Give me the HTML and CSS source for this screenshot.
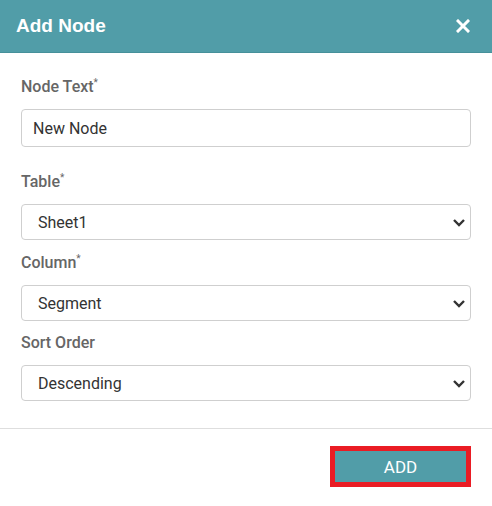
FILE: index.html
```html
<!DOCTYPE html>
<html>
<head>
<meta charset="utf-8">
<link rel="stylesheet" href="styles.css">
</head>
<body>
<div class="dialog">
  <div class="header">
    <span class="title">Add Node</span>
    <svg class="close" width="14" height="14" viewBox="0 0 14 14"><path d="M2 2 L12 12 M12 2 L2 12" stroke="#fff" stroke-width="3" stroke-linecap="square"/></svg>
  </div>
  <div class="body">
    <div class="field field-text">
      <label class="label">Node Text<sup>*</sup></label>
      <input class="input" type="text" value="New Node">
    </div>
    <div class="field field-table">
      <label class="label">Table<sup>*</sup></label>
      <div class="select-wrap">
        <select class="select"><option>Sheet1</option></select>
        <svg class="chev" width="14" height="9" viewBox="0 0 14 9"><path d="M2 2 L7 7 L12 2" fill="none" stroke="#333" stroke-width="2.4"/></svg>
      </div>
    </div>
    <div class="field field-column">
      <label class="label">Column<sup>*</sup></label>
      <div class="select-wrap">
        <select class="select"><option>Segment</option></select>
        <svg class="chev" width="14" height="9" viewBox="0 0 14 9"><path d="M2 2 L7 7 L12 2" fill="none" stroke="#333" stroke-width="2.4"/></svg>
      </div>
    </div>
    <div class="field last">
      <label class="label">Sort Order</label>
      <div class="select-wrap">
        <select class="select"><option>Descending</option></select>
        <svg class="chev" width="14" height="9" viewBox="0 0 14 9"><path d="M2 2 L7 7 L12 2" fill="none" stroke="#333" stroke-width="2.4"/></svg>
      </div>
    </div>
  </div>
  <div class="footer">
    <button class="btn">ADD</button>
  </div>
</div>
</body>
</html>
```

FILE: styles.css
```css
* { box-sizing: border-box; }
html, body { margin: 0; padding: 0; background: #fff; }
body { font-family: Roboto, "Liberation Sans", sans-serif; }
.dialog { width: 492px; }
.header {
  height: 53px;
  background: #519da8;
  border-bottom: 1px solid #46909a;
  display: flex;
  align-items: center;
  justify-content: space-between;
  padding: 0 22px 0 16px;
}
.title {
  font-family: "Liberation Sans", Arial, sans-serif;
  font-weight: bold;
  font-size: 19px;
  color: #fff;
}
.close { display: block; }
.body {
  padding: 24px 21px 27px 21px;
  border-bottom: 1px solid #dedede;
}
.field { display: flex; flex-direction: column; margin-bottom: 12px; }
.field-text { margin-bottom: 25px; }
.field-table { margin-bottom: 13px; }
.field.last { margin-bottom: 0; }
.label {
  font-size: 16px;
  line-height: 20px;
  font-weight: 500;
  color: #666;
  margin-bottom: 12px;
}
.label sup { font-size: 10px; line-height: 0; vertical-align: 6px; font-weight: 400; }
.input {
  height: 38px;
  border: 1px solid #cfcfcf;
  border-radius: 4px;
  padding: 0 11px;
  font-family: Roboto, sans-serif;
  font-size: 16px;
  color: #333;
  outline: none;
}
.select-wrap { position: relative; }
.select {
  -webkit-appearance: none;
  appearance: none;
  width: 100%;
  height: 36px;
  border: 1px solid #cfcfcf;
  border-radius: 4px;
  background: #fff;
  padding: 0 16px;
  font-family: Roboto, sans-serif;
  font-size: 16px;
  color: #333;
  outline: none;
}
.chev { position: absolute; right: 5px; top: 14px; }
.footer {
  display: flex;
  justify-content: flex-end;
  padding: 17px 21px 0 0;
}
.btn {
  width: 141px;
  height: 41px;
  border: 5px solid #ea1c24;
  background: #519da8;
  color: #fff;
  font-family: Roboto, sans-serif;
  font-size: 17px;
  padding: 0;
}
```
